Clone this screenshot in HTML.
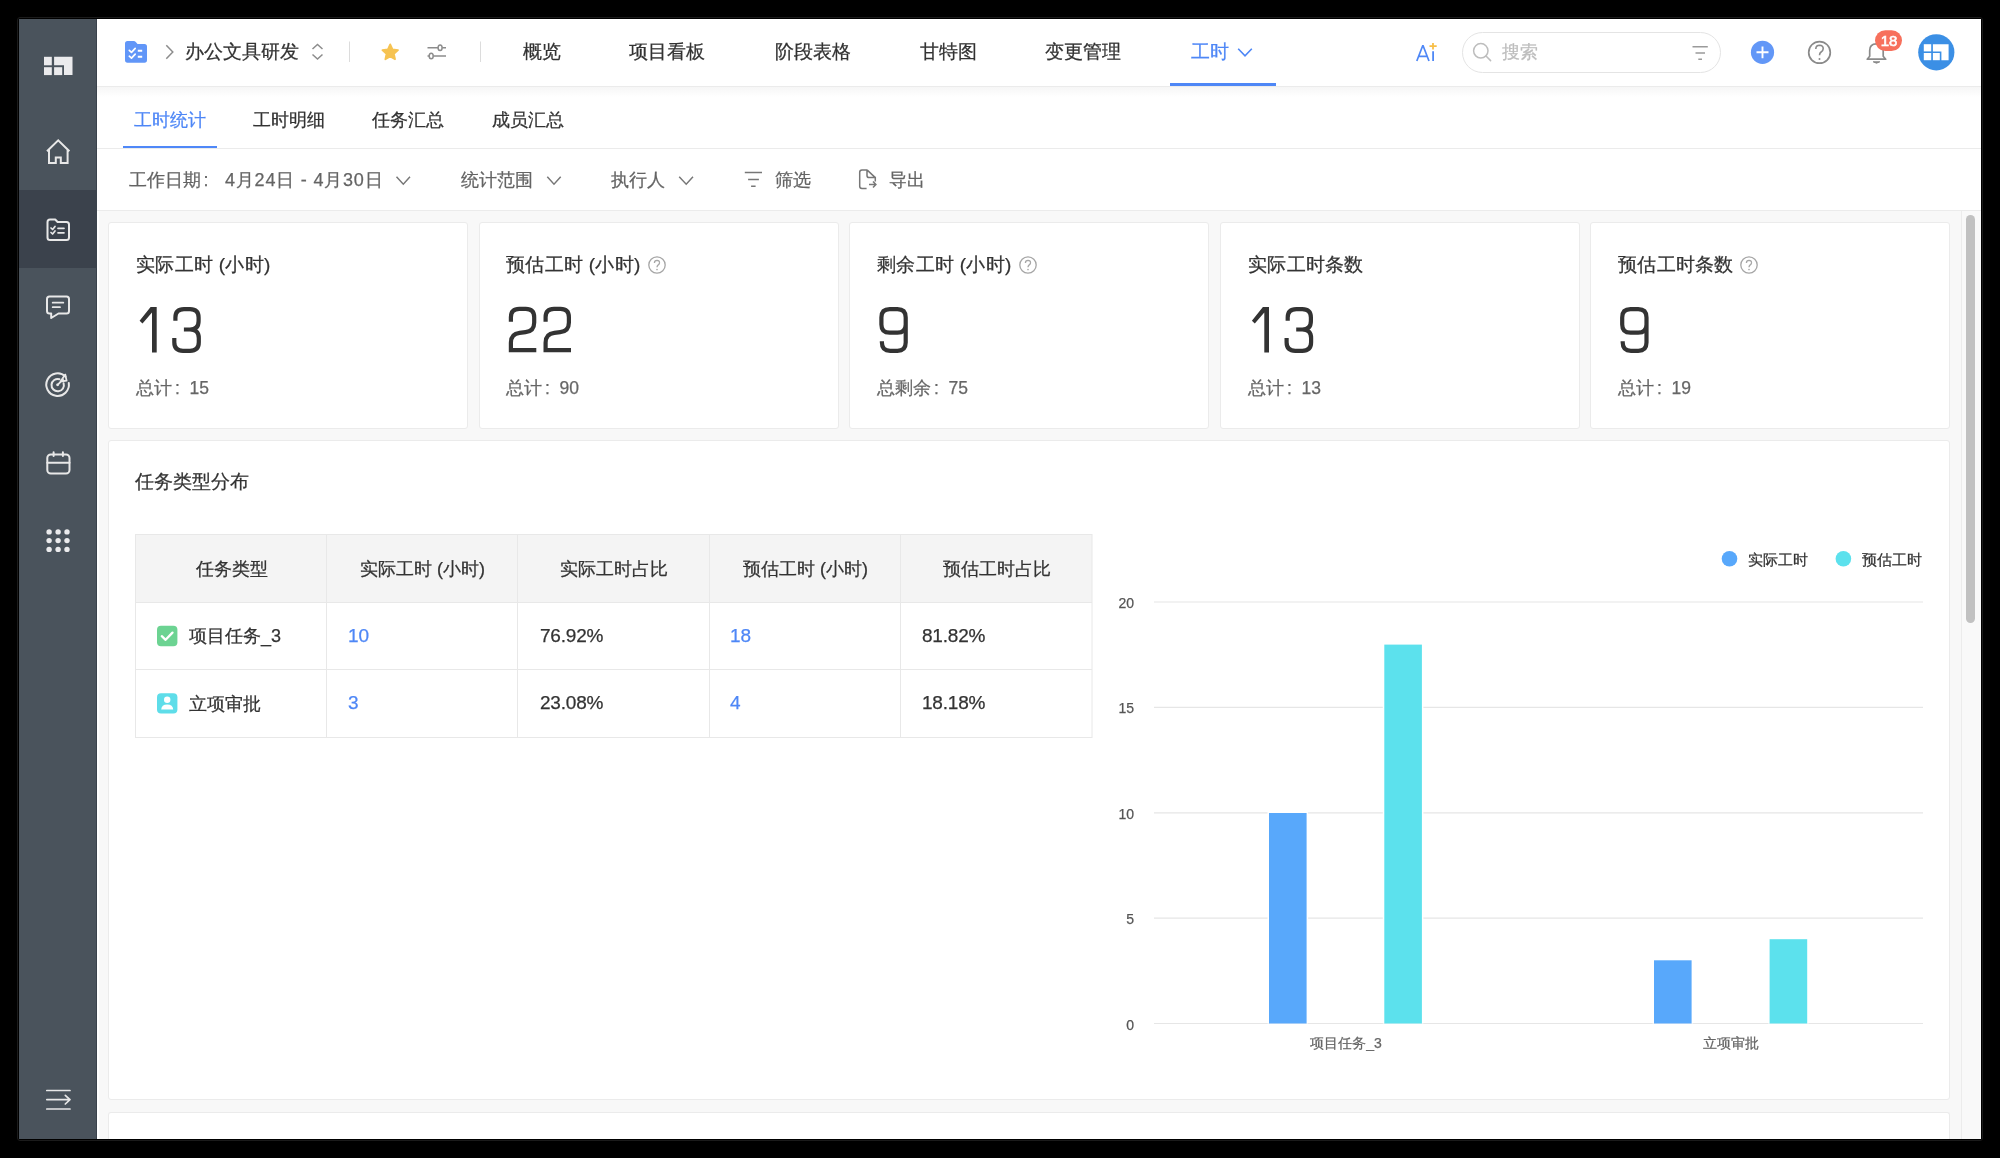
<!DOCTYPE html>
<html><head><meta charset="utf-8">
<style>
*{box-sizing:border-box;margin:0;padding:0}
html,body{width:2000px;height:1158px;overflow:hidden;background:#000}
body{position:relative;font-family:"Liberation Sans",sans-serif;color:#333}
.a{position:absolute}
.t{position:absolute;white-space:nowrap;line-height:30px;-webkit-text-stroke:0.25px currentColor;will-change:transform}
svg{position:absolute;overflow:visible}
.cl{display:inline-block;width:17.5px;padding-left:3px}
</style></head><body>
<!-- frame -->
<div class="a" style="left:17px;top:17px;width:1966px;height:1124px;border:1px solid #1b1b1b;border-radius:3px"></div>
<div class="a" style="left:19px;top:19px;width:1962px;height:1120px;background:#fff"></div>

<!-- sidebar -->
<div class="a" style="left:19px;top:19px;width:78px;height:1120px;background:#4a535c"></div>
<div class="a" style="left:96px;top:19px;width:1px;height:1120px;background:#3a424c"></div>
<div class="a" style="left:19px;top:190px;width:77px;height:78px;background:#3b424c"></div>
<svg class="a" style="left:0;top:0" width="100" height="1158" viewBox="0 0 100 1158">
<g fill="#ebebed">
<rect x="44" y="56.8" width="7.8" height="8.5"/>
<rect x="44" y="67.2" width="7.8" height="7.9"/>
<rect x="54.1" y="67.2" width="8.1" height="7.9"/>
<path d="M54.1 56.8H72.5V75.1H64V65.3H54.1Z"/>
</g>
<g fill="none" stroke="#e8e8e8" stroke-width="2" stroke-linejoin="round" stroke-linecap="round">
<path d="M47 151.3L58.2 140.3L69.4 151.3M49 149.5V163H55.8V157.6H60.8V163H67.6V149.5" stroke-linecap="butt" stroke-linejoin="miter"/>
<path d="M50.5 219.5H55.2L57.6 222H66.5Q69 222 69 224.5V237.5Q69 240 66.5 240H50Q47.5 240 47.5 237.5V222Q47.5 219.5 50 219.5Z"/>
<path d="M51 228L52.6 229.5L55 226.5M51 232.5L52.6 234L55 231M58 228.3H64M58 232.8H64" stroke-width="1.7"/>
<path d="M49.5 296.5H66.5Q69 296.5 69 299V311Q69 313.5 66.5 313.5H58.5L51.2 318V313.5H49.5Q47 313.5 47 311V299Q47 296.5 49.5 296.5Z"/>
<path d="M52.7 302.7H63.3M52.7 307.2H60" stroke-width="1.8"/>
<path d="M65.5 376.5A11.3 11.3 0 1 0 68.8 383"/>
<path d="M59.5 379.2A6.2 6.2 0 1 0 63.6 383.2"/>
<circle cx="57.6" cy="384.8" r="1.4" fill="#e8e8e8" stroke="none"/>
<path d="M57.6 384.8L63 379.5M60.5 381.5L65.3 374.6L66.6 380.6Z" stroke-width="1.8"/>
<rect x="47.3" y="454.5" width="22.2" height="19" rx="3.5"/>
<path d="M47.3 462.8H69.5M53.6 452.3V456M62.9 452.3V456"/>
<path d="M46.8 1090.5H70M46.8 1099.6H70M65.3 1095.3L70 1099.6L65.3 1104M46.8 1109H70" stroke-width="1.7"/>
</g>
<g fill="#ebebed">
<circle cx="49.1" cy="531.9" r="2.7"/><circle cx="58.1" cy="531.9" r="2.7"/><circle cx="67" cy="531.9" r="2.7"/>
<circle cx="49.1" cy="540.6" r="2.7"/><circle cx="58.1" cy="540.6" r="2.7"/><circle cx="67" cy="540.6" r="2.7"/>
<circle cx="49.1" cy="549.4" r="2.7"/><circle cx="58.1" cy="549.4" r="2.7"/><circle cx="67" cy="549.4" r="2.7"/>
</g>
</svg>

<!-- top nav -->
<div class="a" style="left:97px;top:86px;width:1884px;height:1px;background:#ebebeb"></div>
<div class="a" style="left:97px;top:87px;width:1884px;height:10px;background:linear-gradient(#f6f6f6,#fff)"></div>
<svg class="a" style="left:0;top:0" width="2000" height="100" viewBox="0 0 2000 100">
<path d="M127.5 41H133.5Q135 41 136 42.2L137.5 44H144.5Q147 44 147 46.5V60Q147 62.7 144.5 62.7H127.5Q125 62.7 125 60V43.5Q125 41 127.5 41Z" fill="#6196f8"/>
<g fill="none" stroke="#fff" stroke-width="1.7" stroke-linecap="round" stroke-linejoin="round">
<path d="M129.3 50.3L131.5 52.3L135.2 48.3M129.3 56.2L131.5 58.2L135.2 54.2"/>
<path d="M137.8 50.8H142.2M137.8 56.7H142.2" stroke-width="1.9" stroke-linecap="butt"/>
</g>
<path d="M166.3 45.2L172.8 52L166.3 58.7" fill="none" stroke="#8c8c8c" stroke-width="1.5"/>
<path d="M312.5 49L317.5 44.5L322.5 49M312.5 54.5L317.5 59L322.5 54.5" fill="none" stroke="#8c8c8c" stroke-width="1.5"/>
<rect x="349" y="41.5" width="1" height="20.5" fill="#dcdcdc"/>
<rect x="480" y="41.5" width="1" height="20.5" fill="#dcdcdc"/>
<path d="M390.20 44.40 L392.49 49.44 L398.00 50.07 L393.91 53.81 L395.02 59.23 L390.20 56.50 L385.38 59.23 L386.49 53.81 L382.40 50.07 L387.91 49.44Z" fill="#f6c352" stroke="#f6c352" stroke-width="1.8" stroke-linejoin="round"/>
<g fill="none" stroke="#8c8c8c" stroke-width="1.5">
<path d="M427.5 47.8H438M442.2 47.8H446M427.5 56H429.2M433.3 56H446"/>
<ellipse cx="440.1" cy="47.8" rx="2" ry="2.8"/>
<ellipse cx="431.2" cy="56" rx="2" ry="2.8"/>
</g>
<path d="M1238.2 48.7L1245 55.8L1251.8 48.7" fill="none" stroke="#4e87f6" stroke-width="1.6"/>
<rect x="1170" y="83" width="106" height="3" fill="#4e87f6"/>
<g fill="none" stroke="#4e87f6" stroke-width="1.7">
<path d="M1416.8 61L1422.9 45.3L1429 61M1419 56.3H1426.8" stroke-linejoin="bevel"/>
<path d="M1433.1 51.3V61" stroke-width="1.8"/>
</g>
<path d="M1433 43V49.5M1429.5 46.2H1436.7" stroke="#f8bf48" stroke-width="1.8" fill="none"/>
<rect x="1462.5" y="32.5" width="258" height="40" rx="20" fill="#fff" stroke="#e4e4e4"/>
<g fill="none" stroke="#bdbdbd" stroke-width="1.5">
<circle cx="1480.8" cy="50.8" r="7.2"/>
<path d="M1486 56L1490.6 60.6" stroke-linecap="round"/>
</g>
<g fill="none" stroke="#9a9a9a" stroke-width="1.5">
<path d="M1692.5 46.8H1707.8M1695.5 53H1705M1698.3 59.2H1702"/>
</g>
<circle cx="1762.5" cy="52.3" r="11.6" fill="#6297f7"/>
<path d="M1756.5 52.3H1768.5M1762.5 46.4V58.3" stroke="#fff" stroke-width="1.9"/>
<circle cx="1819.5" cy="52.4" r="10.8" fill="none" stroke="#8a8a8a" stroke-width="1.7"/>
<path d="M1815.8 48.9Q1815.9 45.3 1819.6 45.3Q1823.3 45.4 1823.2 48.8Q1823.1 50.8 1821.1 52Q1819.6 53 1819.5 55.3" fill="none" stroke="#8a8a8a" stroke-width="1.6"/>
<circle cx="1819.5" cy="59" r="1" fill="#8a8a8a"/>
<path d="M1867.2 59.2H1885.7L1883.2 56.2V50.5Q1883.2 43.8 1876.4 43.8Q1869.7 43.8 1869.7 50.5V56.2Z" fill="none" stroke="#8a8a8a" stroke-width="1.7" stroke-linejoin="round"/>
<path d="M1873.2 61.8Q1876.5 64.6 1879.8 61.8Z" fill="#8a8a8a" stroke="#8a8a8a" stroke-width="1"/>
<rect x="1875" y="30.2" width="27" height="20.8" rx="10.4" fill="#f7705c"/>
<circle cx="1936.3" cy="52.3" r="18.1" fill="#3b8fe5"/>
<g fill="#fff">
<rect x="1923.8" y="44.2" width="7.4" height="7.2"/>
<rect x="1923.8" y="53" width="7.4" height="7.2"/>
<rect x="1932.9" y="53" width="6.9" height="7.2"/>
<path d="M1932.9 44.2H1948.6V60.2H1941.4V51.4H1932.9Z"/>
</g>
</svg>
<div class="t" style="left:185px;top:37px;font-size:19px;color:#333">办公文具研发</div>
<div class="t" style="left:523px;top:37px;font-size:19px;letter-spacing:0.1px;color:#333">概览</div>
<div class="t" style="left:629px;top:37px;font-size:19px;letter-spacing:0.1px;color:#333">项目看板</div>
<div class="t" style="left:774.5px;top:37px;font-size:19px;letter-spacing:0.1px;color:#333">阶段表格</div>
<div class="t" style="left:919.5px;top:37px;font-size:19px;letter-spacing:0.1px;color:#333">甘特图</div>
<div class="t" style="left:1045px;top:37px;font-size:19px;letter-spacing:0.1px;color:#333">变更管理</div>
<div class="t" style="left:1190.5px;top:37px;font-size:19px;letter-spacing:0.1px;color:#4e87f6">工时</div>
<div class="t" style="left:1501.5px;top:37px;font-size:18px;color:#bdbdbd">搜索</div>
<div class="t" style="left:1878.5px;top:25.5px;font-size:15px;color:#fff;width:20px;text-align:center;-webkit-text-stroke:0.6px #fff">18</div>


<!-- sub tabs -->
<div class="a" style="left:97px;top:148px;width:1884px;height:1px;background:#ebebeb"></div>
<div class="t" style="left:134px;top:105px;font-size:18px;color:#4e87f6">工时统计</div>
<div class="t" style="left:253px;top:105px;font-size:18px;color:#333">工时明细</div>
<div class="t" style="left:372px;top:105px;font-size:18px;color:#333">任务汇总</div>
<div class="t" style="left:491.5px;top:105px;font-size:18px;color:#333">成员汇总</div>
<div class="a" style="left:123px;top:146px;width:93.5px;height:2.3px;background:#4f88f8"></div>


<!-- filter row -->
<div class="a" style="left:97px;top:210px;width:1884px;height:1px;background:#ebebeb"></div>
<div class="t" style="left:129px;top:165px;font-size:18px;color:#646464">工作日期<span style="display:inline-block;width:18px;padding-left:2.5px">:</span></div>
<div class="t" style="left:225px;top:165px;font-size:18px;color:#646464;letter-spacing:0.8px">4月24日 - 4月30日</div>
<div class="t" style="left:460.5px;top:165px;font-size:18px;color:#646464">统计范围</div>
<div class="t" style="left:611px;top:165px;font-size:18px;color:#646464">执行人</div>
<div class="t" style="left:775px;top:165px;font-size:18px;color:#646464">筛选</div>
<div class="t" style="left:888.5px;top:165px;font-size:18px;color:#646464">导出</div>
<svg class="a" style="left:0;top:150px" width="1000" height="60" viewBox="0 150 1000 60">
<g fill="none" stroke="#777" stroke-width="1.5">
<path d="M396.5 176.8L403.3 184.2L410 176.8M547.3 176.8L554 184.2L560.7 176.8M679.2 176.8L686.2 184.2L693 176.8"/>
<path d="M744.8 172.4H762M748.1 179.4H758.9M751.1 186.3H755.6"/>
<path d="M867 169.9H862Q859.7 169.9 859.7 172.2V186.2Q859.7 188.4 862 188.4H866.6M867 169.9L875.3 177.6M867 169.9V175.4Q867 177.6 869.2 177.6H875.3V181.5M869 184.5H875.8M873 181.5L875.9 184.5L873 187.5"/>
</g>
</svg>


<!-- content -->
<div class="a" style="left:99px;top:211px;width:1882px;height:928px;background:#f8f8f8"></div>
<div class="a" style="left:108px;top:222px;width:360px;height:207px;background:#fff;border:1px solid #ebebeb;border-radius:3px"></div>
<div class="t" style="left:135.5px;top:250px;font-size:19px;letter-spacing:0.3px;color:#333">实际工时 (小时)</div>
<div class="t" style="left:135.5px;top:373px;font-size:17.5px;color:#666">总计<span class="cl">:</span>15</div>
<div class="a" style="left:479px;top:222px;width:360px;height:207px;background:#fff;border:1px solid #ebebeb;border-radius:3px"></div>
<div class="t" style="left:506px;top:250px;font-size:19px;letter-spacing:0.3px;color:#333">预估工时 (小时)</div>
<div class="t" style="left:506px;top:373px;font-size:17.5px;color:#666">总计<span class="cl">:</span>90</div>
<svg class="a" style="left:648px;top:255.5px" width="18" height="18" viewBox="0 0 18 18"><circle cx="9" cy="9" r="8.2" fill="none" stroke="#a6a6a6" stroke-width="1.3"/><path d="M6.4 7Q6.5 4.4 9 4.4Q11.6 4.5 11.5 6.9Q11.4 8.3 10 9.1Q9 9.8 9 11.3" fill="none" stroke="#a6a6a6" stroke-width="1.3"/><circle cx="9" cy="13.6" r="0.8" fill="#a6a6a6"/></svg>
<div class="a" style="left:849px;top:222px;width:360px;height:207px;background:#fff;border:1px solid #ebebeb;border-radius:3px"></div>
<div class="t" style="left:876.5px;top:250px;font-size:19px;letter-spacing:0.3px;color:#333">剩余工时 (小时)</div>
<div class="t" style="left:876.5px;top:373px;font-size:17.5px;color:#666">总剩余<span class="cl">:</span>75</div>
<svg class="a" style="left:1019px;top:255.5px" width="18" height="18" viewBox="0 0 18 18"><circle cx="9" cy="9" r="8.2" fill="none" stroke="#a6a6a6" stroke-width="1.3"/><path d="M6.4 7Q6.5 4.4 9 4.4Q11.6 4.5 11.5 6.9Q11.4 8.3 10 9.1Q9 9.8 9 11.3" fill="none" stroke="#a6a6a6" stroke-width="1.3"/><circle cx="9" cy="13.6" r="0.8" fill="#a6a6a6"/></svg>
<div class="a" style="left:1220px;top:222px;width:360px;height:207px;background:#fff;border:1px solid #ebebeb;border-radius:3px"></div>
<div class="t" style="left:1247.5px;top:250px;font-size:19px;letter-spacing:0.3px;color:#333">实际工时条数</div>
<div class="t" style="left:1247.5px;top:373px;font-size:17.5px;color:#666">总计<span class="cl">:</span>13</div>
<div class="a" style="left:1590px;top:222px;width:360px;height:207px;background:#fff;border:1px solid #ebebeb;border-radius:3px"></div>
<div class="t" style="left:1617.5px;top:250px;font-size:19px;letter-spacing:0.3px;color:#333">预估工时条数</div>
<div class="t" style="left:1617.5px;top:373px;font-size:17.5px;color:#666">总计<span class="cl">:</span>19</div>
<svg class="a" style="left:1740.3px;top:255.5px" width="18" height="18" viewBox="0 0 18 18"><circle cx="9" cy="9" r="8.2" fill="none" stroke="#a6a6a6" stroke-width="1.3"/><path d="M6.4 7Q6.5 4.4 9 4.4Q11.6 4.5 11.5 6.9Q11.4 8.3 10 9.1Q9 9.8 9 11.3" fill="none" stroke="#a6a6a6" stroke-width="1.3"/><circle cx="9" cy="13.6" r="0.8" fill="#a6a6a6"/></svg>

<div class="a" style="left:108px;top:440px;width:1841.5px;height:660px;background:#fff;border:1px solid #ebebeb;border-radius:3px"></div>
<div class="a" style="left:108px;top:1111.5px;width:1841.5px;height:27.5px;background:#fff;border:1px solid #ebebeb;border-bottom:none;border-radius:3px 3px 0 0"></div>
<div class="t" style="left:135px;top:467px;font-size:18.7px;color:#333">任务类型分布</div>
<svg class="a" style="left:0;top:0" width="2000" height="1158" viewBox="0 0 2000 1158">
<rect x="135.5" y="534.5" width="956.5" height="68" fill="#f4f4f4"/>
<g fill="none" stroke="#e8e8e8" stroke-width="1">
<rect x="135.5" y="534.5" width="956.5" height="203"/>
<path d="M135.5 602.5H1092M135.5 669.5H1092M326.5 534.5V737.5M517.5 534.5V737.5M709.5 534.5V737.5M900.5 534.5V737.5"/>
</g>
<rect x="157" y="625.8" width="20.4" height="20.4" rx="4" fill="#6cd392"/>
<path d="M161.8 636.2L165.6 639.8L172.5 632.6" fill="none" stroke="#fff" stroke-width="2.3" stroke-linecap="round" stroke-linejoin="round"/>
<rect x="157" y="693.2" width="20.4" height="20.4" rx="4" fill="#5edde9"/>
<circle cx="167.2" cy="699.8" r="3.2" fill="#fff"/>
<path d="M161.2 709.6Q161.4 704.4 167.2 704.4Q173 704.4 173.2 709.6Z" fill="#fff"/>
<g stroke="#e6e6e6" stroke-width="1.2">
<path d="M1154 602H1923M1154 707.4H1923M1154 812.8H1923M1154 918.1H1923M1154 1023.5H1923"/>
</g>
<g fill="#fff">
<rect x="1267.5" y="811.5" width="40.6" height="212"/>
<rect x="1652.5" y="958.8" width="40.6" height="64.7"/>
<rect x="1382.8" y="643.1" width="40.6" height="380.4"/>
<rect x="1768.1" y="937.7" width="40.6" height="85.8"/>
</g>
<g fill="#58a8fb">
<rect x="1269" y="813" width="37.6" height="210.5"/>
<rect x="1654" y="960.3" width="37.6" height="63.2"/>
</g>
<g fill="#5ce1ed">
<rect x="1384.3" y="644.6" width="37.6" height="378.9"/>
<rect x="1769.6" y="939.2" width="37.6" height="84.3"/>
</g>
<circle cx="1729.5" cy="558.8" r="7.8" fill="#58a8fb"/>
<circle cx="1843.4" cy="558.8" r="7.8" fill="#5ce1ed"/>
</svg>
<div class="t" style="left:135.5px;top:553.5px;width:191px;text-align:center;font-size:18px;color:#333">任务类型</div>
<div class="t" style="left:326.5px;top:553.5px;width:191px;text-align:center;font-size:18px;color:#333">实际工时 (小时)</div>
<div class="t" style="left:517.5px;top:553.5px;width:192px;text-align:center;font-size:18px;color:#333">实际工时占比</div>
<div class="t" style="left:709.5px;top:553.5px;width:191px;text-align:center;font-size:18px;color:#333">预估工时 (小时)</div>
<div class="t" style="left:900.5px;top:553.5px;width:191.5px;text-align:center;font-size:18px;color:#333">预估工时占比</div>
<div class="t" style="left:188.5px;top:621px;font-size:18px;color:#333">项目任务_3</div>
<div class="t" style="left:347.5px;top:620.5px;font-size:19px;color:#4e87f6">10</div>
<div class="t" style="left:539.5px;top:620.5px;font-size:19px;letter-spacing:-0.2px;color:#333">76.92%</div>
<div class="t" style="left:730px;top:620.5px;font-size:19px;color:#4e87f6">18</div>
<div class="t" style="left:922px;top:620.5px;font-size:19px;letter-spacing:-0.2px;color:#333">81.82%</div>
<div class="t" style="left:188.5px;top:688.5px;font-size:18px;color:#333">立项审批</div>
<div class="t" style="left:347.5px;top:688px;font-size:19px;color:#4e87f6">3</div>
<div class="t" style="left:539.5px;top:688px;font-size:19px;letter-spacing:-0.2px;color:#333">23.08%</div>
<div class="t" style="left:730px;top:688px;font-size:19px;color:#4e87f6">4</div>
<div class="t" style="left:922px;top:688px;font-size:19px;letter-spacing:-0.2px;color:#333">18.18%</div>
<div class="t" style="left:1084px;top:588px;width:50px;text-align:right;font-size:14px;color:#555">20</div>
<div class="t" style="left:1084px;top:693.4px;width:50px;text-align:right;font-size:14px;color:#555">15</div>
<div class="t" style="left:1084px;top:798.8px;width:50px;text-align:right;font-size:14px;color:#555">10</div>
<div class="t" style="left:1084px;top:904.1px;width:50px;text-align:right;font-size:14px;color:#555">5</div>
<div class="t" style="left:1084px;top:1009.5px;width:50px;text-align:right;font-size:14px;color:#555">0</div>
<div class="t" style="left:1246.25px;top:1028px;width:200px;text-align:center;font-size:14px;color:#666">项目任务_3</div>
<div class="t" style="left:1630.75px;top:1028px;width:200px;text-align:center;font-size:14px;color:#666">立项审批</div>
<div class="t" style="left:1748px;top:544.5px;font-size:14.8px;color:#333">实际工时</div>
<div class="t" style="left:1862px;top:544.5px;font-size:14.8px;color:#333">预估工时</div>


<svg class="a" style="left:0;top:0" width="2000" height="400" viewBox="0 0 2000 400">
<path transform="translate(0 0)" d="M150.6 307H156.7V352.6H152V312.4L142.5 323.6L139.6 320.8Z" fill="#333"/>
<path transform="translate(0 0)" d="M175.4 320.7V317.5Q175.4 309.1 184 309.1H190Q198.6 309.1 198.6 317.5V321Q198.6 329.5 190 329.5H183.9M190 329.5Q198.8 329.5 198.8 338V342.3Q198.8 350.8 190 350.8H183Q174.3 350.8 174.3 342.3V338" fill="none" stroke="#333" stroke-width="4.2"/>
<path transform="translate(0 0)" d="M510.9 321.8V317.3Q510.9 308.9 519.3 308.9H525.8Q534.2 308.9 534.2 317.3V322.5Q534.2 331.3 525.5 332.2L519.6 332.9Q510.9 333.9 510.9 342.7V350.1H536.3" fill="none" stroke="#333" stroke-width="4.2" stroke-linejoin="miter"/>
<path transform="translate(34.7 0)" d="M510.9 321.8V317.3Q510.9 308.9 519.3 308.9H525.8Q534.2 308.9 534.2 317.3V322.5Q534.2 331.3 525.5 332.2L519.6 332.9Q510.9 333.9 510.9 342.7V350.1H536.3" fill="none" stroke="#333" stroke-width="4.2" stroke-linejoin="miter"/>
<path transform="translate(0 0)" d="M905.7 324.5V317.4Q905.7 309.1 897.4 309.1H889.7Q881.4 309.1 881.4 317.4V324.4Q881.4 332.7 889.7 332.7H897.4Q905.7 332.7 905.7 324.5V342.5Q905.7 350.8 897.4 350.8H890.2Q881.9 350.8 881.9 342.5V341.2" fill="none" stroke="#333" stroke-width="4.2"/>
<path transform="translate(1112.3 0)" d="M150.6 307H156.7V352.6H152V312.4L142.5 323.6L139.6 320.8Z" fill="#333"/>
<path transform="translate(1112.3 0)" d="M175.4 320.7V317.5Q175.4 309.1 184 309.1H190Q198.6 309.1 198.6 317.5V321Q198.6 329.5 190 329.5H183.9M190 329.5Q198.8 329.5 198.8 338V342.3Q198.8 350.8 190 350.8H183Q174.3 350.8 174.3 342.3V338" fill="none" stroke="#333" stroke-width="4.2"/>
<path transform="translate(740.8 0)" d="M905.7 324.5V317.4Q905.7 309.1 897.4 309.1H889.7Q881.4 309.1 881.4 317.4V324.4Q881.4 332.7 889.7 332.7H897.4Q905.7 332.7 905.7 324.5V342.5Q905.7 350.8 897.4 350.8H890.2Q881.9 350.8 881.9 342.5V341.2" fill="none" stroke="#333" stroke-width="4.2"/>
</svg>
<!-- scrollbar -->
<div class="a" style="left:1961px;top:211px;width:1px;height:928px;background:#ececec"></div>
<div class="a" style="left:1962px;top:211px;width:19px;height:928px;background:#f9f9f9"></div>
<div class="a" style="left:1966px;top:215px;width:9px;height:408px;border-radius:5px;background:#c1c1c1"></div>
</body></html>
